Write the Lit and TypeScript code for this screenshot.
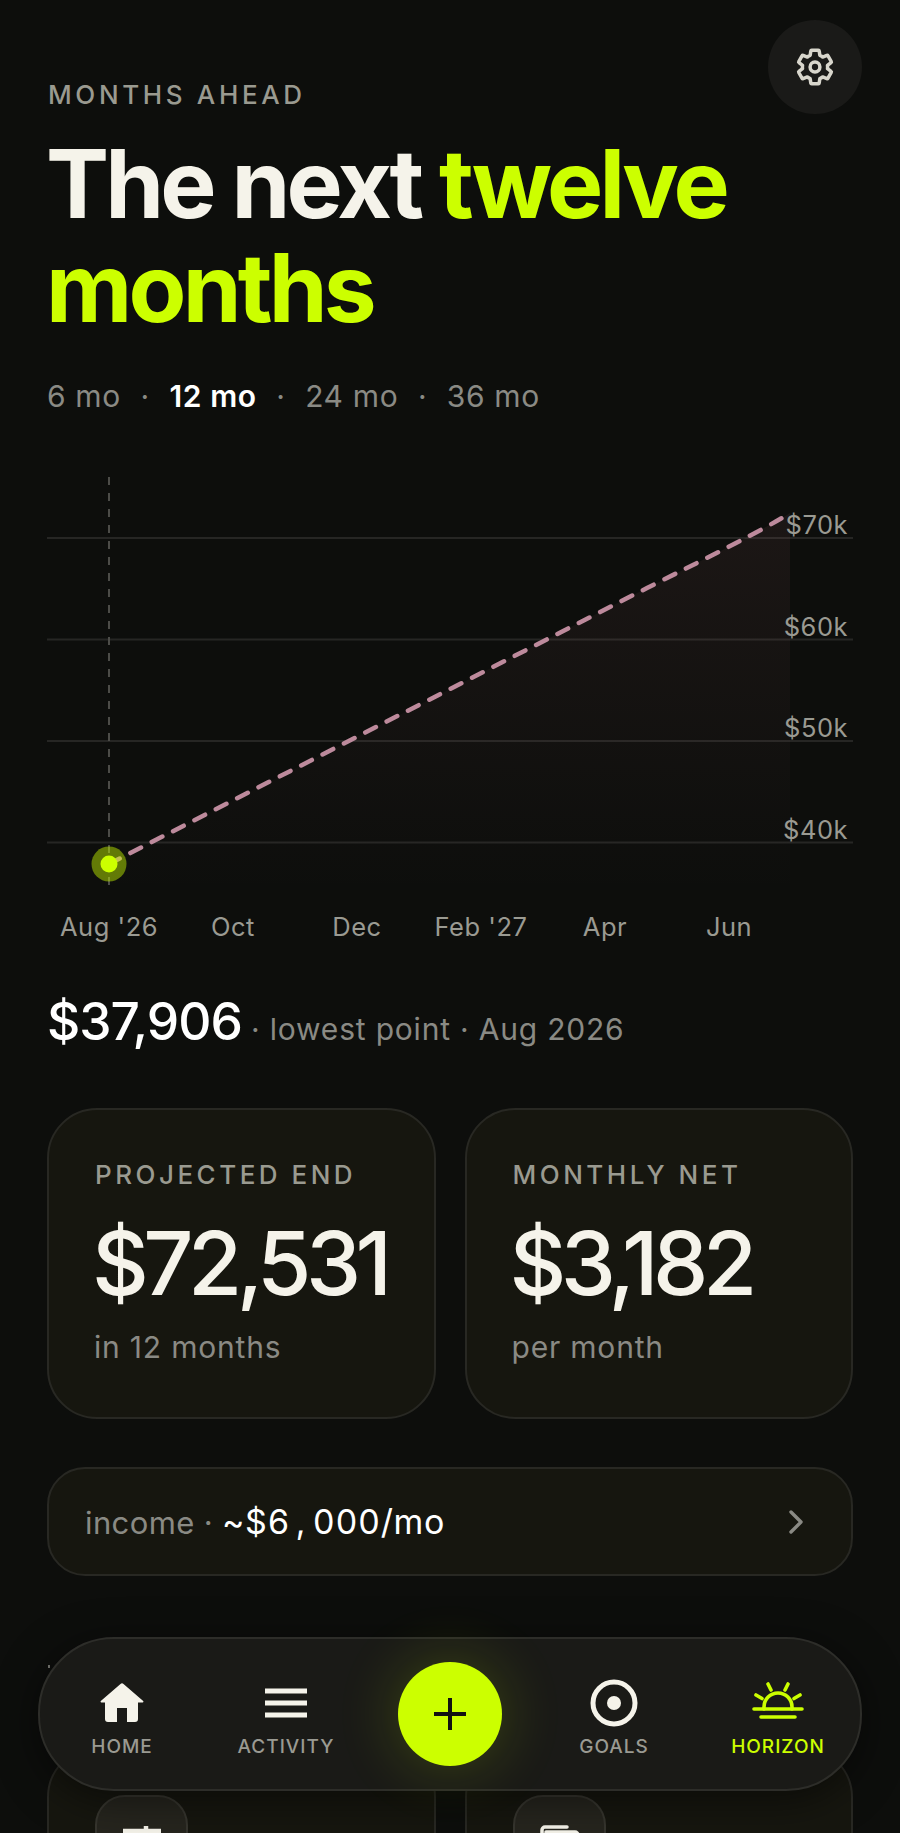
import { LitElement, html, css, svg } from "lit";
import { customElement } from "lit/decorators.js";

const Y_TICKS = [["$70k", 68], ["$60k", 169.5], ["$50k", 271], ["$40k", 372.5]] as const;
const X_TICKS = ["Aug '26", "Oct", "Dec", "Feb '27", "Apr", "Jun"];

@customElement("app-root")
export class AppRoot extends LitElement {
  static styles = css`
    :host { display: block; width: 900px; height: 1833px; font-family: Inter, "Liberation Sans", sans-serif; }
    .page { position: relative; width: 900px; height: 1833px; overflow: hidden; background: #0d0e0c; box-sizing: border-box; padding: 80px 47px 0 47px; color: #f5f3ea; }
    .gear { position: absolute; top: 20px; left: 768px; width: 94px; height: 94px; border-radius: 50%; background: #1a1a18; display: flex; align-items: center; justify-content: center; }
    .eyebrow { font-size: 26px; line-height: 30px; font-weight: 500; letter-spacing: 3.64px; color: #9a9a90; padding-left: 1px; }
    h1 { margin: 22px 0 0 -1px; font-size: 94.500px; line-height: 104px; font-weight: 700; letter-spacing: -3.78px; color: #f5f3ea; }
    h1 span { color: #ccff00; }
    .tabs { margin-top: 36px; display: flex; align-items: center; font-size: 30px; line-height: 40px; letter-spacing: .65px; color: #8a8a84; }
    .tabs b { font-weight: 600; color: #fff; letter-spacing: .6px; }
    .tabs i { font-style: normal; width: 48.500px; text-align: center; }
    .chart { display: block; margin-top: 54px; width: 806px; height: 480px; }
    .chart text { font-family: Inter, "Liberation Sans", sans-serif; font-size: 25.500px; fill: #9a9a92; letter-spacing: .5px; }
    .stat { margin-top: 36px; height: 70px; display: flex; align-items: baseline; font-size: 30px; letter-spacing: .8px; color: #8a8a84; white-space: pre; }
    .stat strong { font-size: 51.500px; line-height: 70px; font-weight: 500; letter-spacing: -1px; color: #fff; }
    .cards { display: grid; grid-template-columns: minmax(0, 1fr) minmax(0, 1fr); gap: 29px; }
    .cards.top { margin-top: 52px; }
    .card { box-sizing: border-box; background: #16160f; border: 2px solid #282823; border-radius: 50px; padding: 46px; height: 311px; }
    .label { margin-top: 4px; font-size: 26px; line-height: 30px; font-weight: 500; letter-spacing: 3.500px; color: #9a9a90; white-space: nowrap; }
    .value { margin-top: 23px; margin-left: -3px; font-size: 88px; line-height: 100px; font-weight: 500; letter-spacing: -5.500px; color: #f5f3ea; }
    .sub { margin-top: 14px; margin-left: -1px; font-size: 30px; line-height: 40px; letter-spacing: .8px; color: #8a8a84; }
    .income { box-sizing: border-box; margin-top: 48px; height: 109px; display: flex; align-items: center; justify-content: space-between; padding: 0 45px 0 36px; background: #16160f; border: 2px solid #282823; border-radius: 38px; font-size: 31px; letter-spacing: .4px; color: #8a8a84; }
    .income b { font-size: 34px; font-weight: 400; color: #fff; font-variant-numeric: tabular-nums; letter-spacing: .6px; }
    .income em { font-style: normal; margin: 0 7px 0 6px; }
    .peek { margin-top: 89px; margin-left: 1px; width: 2px; height: 3px; background: #7a7a74; }
    .cards.low { margin-top: 79px; }
    .tile { box-sizing: border-box; width: 93px; height: 93px; border-radius: 30px; background: #26251e; border: 2px solid #36352e; display: flex; align-items: center; justify-content: center; }
    nav { position: absolute; left: 38px; top: 1637px; width: 824px; height: 154px; box-sizing: border-box; background: #1a1a17; border: 2px solid #2d2d29; border-radius: 76px; display: grid; grid-template-columns: repeat(5, 164px); box-shadow: 0 8px 40px rgba(0,0,0,.5); }
    .nav-item { display: flex; flex-direction: column; align-items: center; padding-top: 36px; font-size: 19px; line-height: 24px; font-weight: 500; letter-spacing: 1px; color: #9a9a92; }
    .nav-item svg { display: block; margin-bottom: 4px; }
    .nav-item.on { color: #ccff00; }
    .fab-wrap { display: flex; align-items: center; justify-content: center; }
    .fab { width: 104px; height: 104px; border-radius: 50%; background: #ccff00; box-shadow: 0 0 64px rgba(204,255,0,.2); display: flex; align-items: center; justify-content: center; }
  `;

  private chart() {
    return html`<svg class="chart" viewBox="0 0 806 480">
      <defs>
        <linearGradient id="area" x1="0" y1="0" x2="0" y2="1">
          <stop offset="0" stop-color="#c87a80" stop-opacity=".08"></stop>
          <stop offset="1" stop-color="#c87a80" stop-opacity="0"></stop>
        </linearGradient>
      </defs>
      ${Y_TICKS.map(([, y]) => svg`<line x1="0" x2="806" y1=${y} y2=${y} stroke="#262624" stroke-width="2"></line>`)}
      <path d="M62 394 L600 118 C 660 88 720 58 743 43 V423 H62 Z" fill="url(#area)"></path>
      <line x1="62" x2="62" y1="7" y2="423" stroke="#4c4c48" stroke-width="2" stroke-dasharray="8 8"></line>
      <path d="M62 394 L600 118 C 660 88 720 58 743 43" fill="none" stroke="#bd8a9c" stroke-width="4.500" stroke-linecap="round" stroke-dasharray="12 12"></path>
      <circle cx="62" cy="394" r="17.500" fill="#ccff00" fill-opacity=".45"></circle>
      <circle cx="62" cy="394" r="8.500" fill="#ccff00"></circle>
      ${Y_TICKS.map(([t, y]) => svg`<text x="801" y=${y - 4} text-anchor="end">${t}</text>`)}
      ${X_TICKS.map((t, i) => svg`<text x=${62 + i * 124} y="466" text-anchor="middle">${t}</text>`)}
    </svg>`;
  }

  render() {
    return html`<div class="page">
      <div class="gear">
        <svg width="42" height="42" viewBox="0 0 24 24" fill="none" stroke="#d8d6cc" stroke-width="2" stroke-linejoin="round">
          <path d="M19.14 12.94c.04-.3.06-.61.06-.94 0-.32-.02-.64-.07-.94l2.03-1.58c.18-.14.23-.41.12-.61l-1.92-3.32c-.12-.22-.37-.29-.59-.22l-2.39.96c-.5-.38-1.03-.7-1.62-.94l-.36-2.54c-.04-.24-.24-.41-.48-.41h-3.84c-.24 0-.43.17-.47.41l-.36 2.54c-.59.24-1.13.57-1.62.94l-2.39-.96c-.22-.08-.47 0-.59.22L2.74 8.87c-.12.21-.08.47.12.61l2.03 1.58c-.05.3-.09.63-.09.94s.02.64.07.94l-2.03 1.58c-.18.14-.23.41-.12.61l1.92 3.32c.12.22.37.29.59.22l2.39-.96c.5.38 1.03.7 1.62.94l.36 2.54c.05.24.24.41.48.41h3.84c.24 0 .44-.17.47-.41l.36-2.54c.59-.24 1.13-.56 1.62-.94l2.39.96c.22.08.47 0 .59-.22l1.92-3.32c.12-.22.07-.47-.12-.61l-2.01-1.58z"></path>
          <circle cx="12" cy="12" r="2.800"></circle>
        </svg>
      </div>
      <div class="eyebrow">MONTHS AHEAD</div>
      <h1>The next <span>twelve months</span></h1>
      <div class="tabs"><span>6 mo</span><i>·</i><b>12 mo</b><i>·</i><span>24 mo</span><i>·</i><span>36 mo</span></div>
      ${this.chart()}
      <div class="stat"><strong>$37,906</strong> · lowest point · Aug 2026</div>
      <div class="cards top">
        <div class="card"><div class="label">PROJECTED END</div><div class="value">$72,531</div><div class="sub">in 12 months</div></div>
        <div class="card"><div class="label">MONTHLY NET</div><div class="value">$3,182</div><div class="sub">per month</div></div>
      </div>
      <div class="income">
        <span>income · <b>~$6<em>,</em>000/mo</b></span>
        <svg width="20" height="28" viewBox="0 0 20 28" fill="none" stroke="#8a8a84" stroke-width="3.400" stroke-linecap="round" stroke-linejoin="round"><path d="M5 4l10 10L5 24"></path></svg>
      </div>
      <div class="peek"></div>
      <div class="cards low">
        <div class="card">
          <div class="tile">
            <svg width="56" height="56" viewBox="0 0 56 56" fill="none" stroke="#f5f3ea" stroke-width="4.500"><path d="M9 17h38M32 12v10"></path></svg>
          </div>
        </div>
        <div class="card">
          <div class="tile">
            <svg width="56" height="56" viewBox="0 0 56 56" fill="none" stroke="#f5f3ea" stroke-width="3.500" stroke-linecap="round"><path d="M11 22v-6a3 3 0 0 1 3-3h22"></path><path d="M15 18h29a3 3 0 0 1 3 3"></path></svg>
          </div>
        </div>
      </div>
      <nav>
        <div class="nav-item">
          <svg width="56" height="56" viewBox="0 0 56 56" fill="#f5f3ea"><path d="M26.500 9a2.200 2.200 0 0 1 3 0L49.200 26a.8.8 0 0 1-.5 1.400H44V44a3 3 0 0 1-3 3H33V33H23V47H14a3 3 0 0 1-3-3V27.400H7.300a.8.8 0 0 1-.5-1.400Z"></path></svg>
          HOME
        </div>
        <div class="nav-item">
          <svg width="56" height="56" viewBox="0 0 56 56" fill="none" stroke="#f5f3ea" stroke-width="5"><path d="M7 16h42M7 28h42M7 40h42"></path></svg>
          ACTIVITY
        </div>
        <div class="fab-wrap">
          <div class="fab"><svg width="36" height="36" viewBox="0 0 36 36" fill="none" stroke="#111" stroke-width="4" stroke-linecap="butt"><path d="M18 2v32M2 18h32"></path></svg></div>
        </div>
        <div class="nav-item">
          <svg width="56" height="56" viewBox="0 0 56 56" fill="none" stroke="#f5f3ea" stroke-width="5"><circle cx="28" cy="28" r="21"></circle><circle cx="28" cy="28" r="7" fill="#f5f3ea" stroke="none"></circle></svg>
          GOALS
        </div>
        <div class="nav-item on">
          <svg width="56" height="56" viewBox="0 0 56 56" fill="none" stroke="#ccff00" stroke-width="3.600" stroke-linecap="round"><path d="M14 34v-2a14 14 0 0 1 28 0v2"></path><path d="M4 34h48M11 42h34M18 9l3 6M38 9l-3 6M6 20l6 3.500M50 20l-6 3.500"></path></svg>
          HORIZON
        </div>
      </nav>
    </div>`;
  }
}
